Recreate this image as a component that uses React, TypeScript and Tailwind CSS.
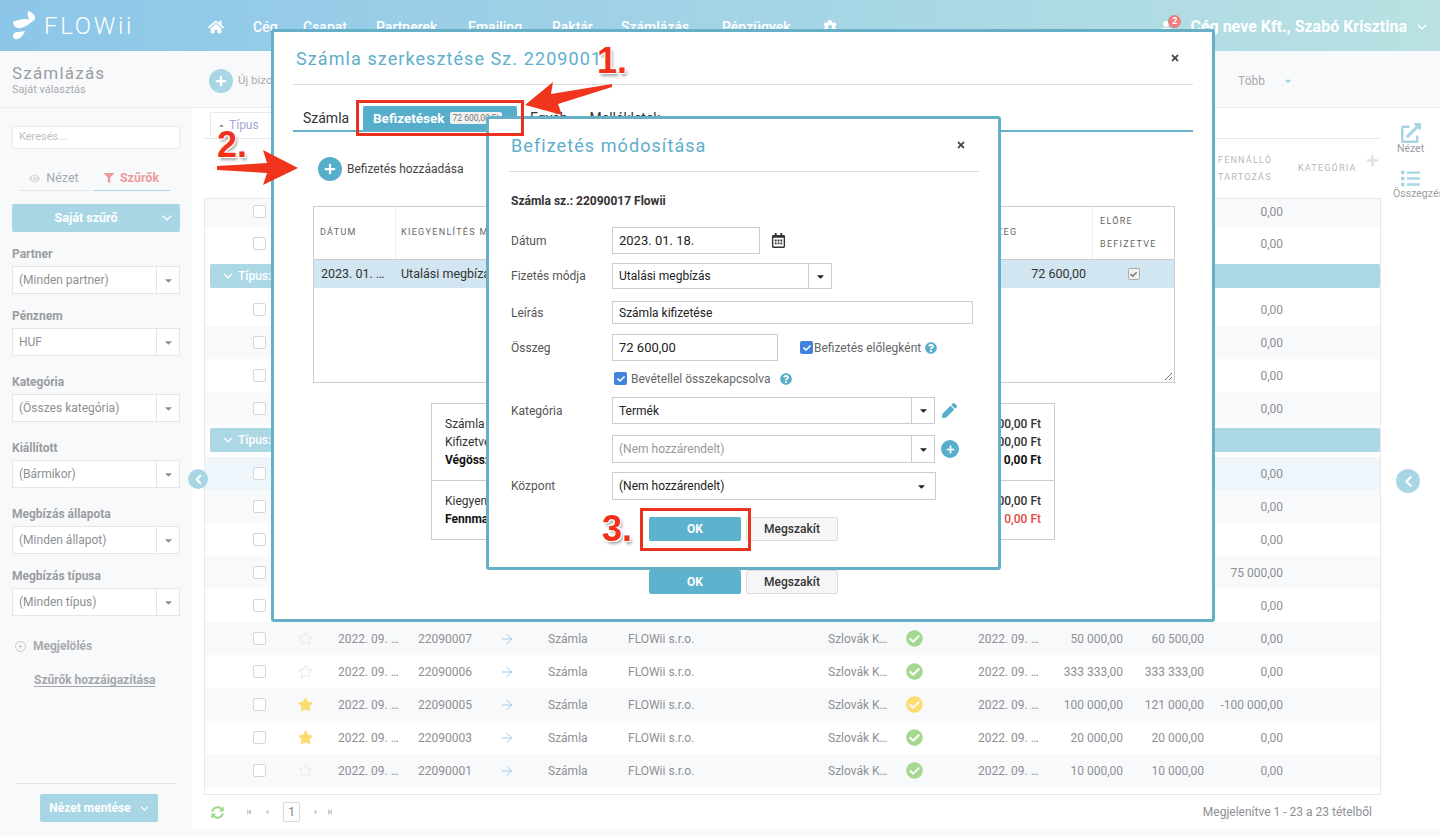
import React from 'react';
import { ChevronDown, ChevronLeft, ArrowRight } from 'lucide-react';
import {
  FaHome, FaCog, FaUser, FaStar, FaRegStar, FaCheckCircle, FaPen, FaPlus, FaQuestionCircle, FaTimes,
  FaCaretDown, FaRegCalendarAlt, FaFilter, FaEye, FaExternalLinkAlt, FaList, FaSyncAlt, FaCheck,
  FaStepBackward, FaStepForward, FaCaretLeft, FaCaretRight, FaCaretUp,
} from 'react-icons/fa';

const font = { fontFamily: 'Roboto, "Noto Sans", sans-serif' };

const Logo = () => (
  <svg width="26" height="32" viewBox="0 0 26 32" fill="white">
    <path d="M16 1c4 1 7 4 7 7 0 3-3 4-5 2-2-2-3-5-2-9z" />
    <path d="M1 12c2-1 8-3 13-3 3 0 6 1 7 2-3 2-7 6-12 7-4 1-8-2-8-6z" />
    <path d="M13 21c-1 3-4 7-7 8-3 1-5-1-5-3 0-3 2-4 5-4 2 0 5-1 7-1z" />
  </svg>
);

const nav: [string, string][] = [
  ['Cég', 'w-[50px]'], ['Csapat', 'w-[73px]'], ['Partnerek', 'w-[92px]'], ['Emailing', 'w-[84px]'],
  ['Raktár', 'w-[69px]'], ['Számlázás', 'w-[101px]'], ['Pénzügyek', 'w-[96px]'],
];

const Header = () => (
  <div className="flex h-[51px] shrink-0 items-center bg-gradient-to-r from-[#8cc6e8] to-[#b9e1e3] pl-[12px] text-white">
    <Logo />
    <span className="ml-[6px] w-[164px] text-[24px] font-light tracking-[2.7px]">FLOWii</span>
    <FaHome className="mr-[29px] mt-[3px] text-[16px]" />
    {nav.map(([n, w]) => (
      <span key={n} className={`${w} mt-[3px] text-[14px] font-medium`}>{n}</span>
    ))}
    <FaCog className="ml-[5px] mt-[3px] text-[14px]" />
    <div className="relative ml-auto mr-[10px] mt-[3px] flex items-center">
      <FaUser className="mr-[18px] text-[12px]" />
      <span className="absolute left-[8px] top-0 flex h-[13px] w-[13px] items-center justify-center rounded-full bg-[#ee7d7d] text-[9px] font-bold">2</span>
      <span className="text-[16px] font-bold">Cég neve Kft., Szabó Krisztina</span>
      <ChevronDown className="ml-[7px]" size={16} />
    </div>
  </div>
);

const SideSelect = ({ label, value, big }: { label: string; value: string; big?: boolean }) => (
  <>
    <div className={`${big ? 'mt-[18px]' : 'mt-[14px]'} h-[16px] text-[12px] font-bold leading-[16px] text-[#9a9da1]`}>{label}</div>
    <div className="mt-[4px] flex h-[28px] items-center border border-[#e4e6e8] bg-white text-[12px] text-[#8d9094]">
      <span className="flex-1 pl-[6px]">{value}</span>
      <span className="flex h-full w-[23px] items-center justify-center border-l border-[#e4e6e8]">
        <FaCaretDown className="text-[11px] text-[#8d9094]" />
      </span>
    </div>
  </>
);

const Sidebar = () => (
  <div className="flex w-[192px] shrink-0 flex-col bg-[#f8f9fb] px-[12px] pb-[14px]">
    <div className="mt-[18px] flex h-[23px] items-center border border-[#e8eaec] bg-white pl-[6px] text-[11px] text-[#bcbfc2]">Keresés...</div>
    <div className="ml-[6px] mt-[17px] flex h-[25px] text-[12.5px]">
      <div className="flex w-[72px] items-center justify-center gap-[6px] border-b border-[#e4e6e8] text-[#a8abae]">
        <FaEye className="text-[11px] text-[#d8dadc]" />Nézet
      </div>
      <div className="ml-[3px] flex w-[77px] items-center justify-center gap-[6px] border-b border-[#a9d6e5] font-bold text-[#ec9a9a]">
        <FaFilter className="text-[10px]" />Szűrők
      </div>
    </div>
    <div className="relative mt-[13px] flex h-[28px] items-center justify-center rounded-[2px] bg-[#a9d6e5] pr-[20px] text-[12.5px] font-bold text-white">
      Saját szűrő
      <ChevronDown className="absolute right-[5px]" size={16} />
    </div>
    <SideSelect label="Partner" value="(Minden partner)" />
    <SideSelect label="Pénznem" value="HUF" />
    <SideSelect big label="Kategória" value="(Összes kategória)" />
    <SideSelect big label="Kiállított" value="(Bármikor)" />
    <SideSelect big label="Megbízás állapota" value="(Minden állapot)" />
    <SideSelect label="Megbízás típusa" value="(Minden típus)" />
    <div className="mt-[22px] flex h-[16px] items-center text-[12px] font-bold text-[#a8abae]">
      <span className="ml-[3px] mr-[7px] flex h-[11px] w-[11px] items-center justify-center rounded-full border border-[#c6c8ca]">
        <FaPlus className="text-[5px] text-[#c6c8ca]" />
      </span>
      Megjelölés
    </div>
    <div className="ml-[22px] mt-[17px] h-[16px] text-[12px] font-bold text-[#a4a7aa] underline underline-offset-2">Szűrők hozzáigazítása</div>
    <div className="mx-[4px] mb-[10px] mt-auto border-t border-[#e2e4e6]" />
    <div className="ml-[28px] flex h-[28px] w-[118px] items-center justify-center gap-[7px] rounded-[2px] bg-[#a9d6e5] pl-[2px] text-[12px] font-bold text-white">
      Nézet mentése<ChevronDown size={13} />
    </div>
  </div>
);

const Box = () => <span className="h-[13px] w-[13px] rounded-[2px] border border-[#d4d6d8] bg-white" />;

type RowData = { star?: number; num?: string; status?: string; net?: string; gross?: string; bal: string; bg?: string };

const Row = ({ star, num, status, net, gross, bal, bg = 'bg-white', h = 'h-[33px]' }: RowData & { h?: string }) => (
  <div className={`flex ${h} shrink-0 items-center text-[12px] text-[#8d9094] ${bg}`}>
    <div className="flex w-[93px] items-center pl-[48px]"><Box /></div>
    <div className="w-[40px]">
      {num && (star === 1 ? <FaStar className="text-[15px] text-[#fbdc6e]" /> : <FaRegStar className="text-[15px] text-[#eceef0]" />)}
    </div>
    <div className="w-[80px]">{num && '2022. 09. …'}</div>
    <div className="w-[80px]">{num}</div>
    <div className="w-[50px] pl-[1px]">{num && <ArrowRight className="text-[#a5c9e6]" size={16} strokeWidth={1.5} />}</div>
    <div className="w-[80px]">{num && 'Számla'}</div>
    <div className="w-[200px]">{num && 'FLOWii s.r.o.'}</div>
    <div className="w-[78px]">{num && 'Szlovák K…'}</div>
    <div className="w-[72px]">{status && <FaCheckCircle className="text-[17px]" style={{ color: status }} />}</div>
    <div className="w-[72px]">{num && '2022. 09. …'}</div>
    <div className="w-[73px] text-right">{net}</div>
    <div className="w-[81px] text-right">{gross}</div>
    <div className="w-[79px] text-right">{bal}</div>
  </div>
);

const GroupRow = ({ top }: { top: string }) => (
  <div className={`${top} mb-[5px] ml-[5px] flex h-[24px] shrink-0 items-center rounded-[2px] bg-[#acd8e6] pl-[11px] text-[12px] font-medium text-white`}>
    <ChevronDown size={14} className="mr-[3px]" />Típus:
  </div>
);

const striped = 'bg-[#f8f9fb]';
const green = '#a4d88f';

const Main = () => (
  <div className="relative flex min-w-0 flex-1 flex-col bg-white">
    <div className="flex">
      <div className="w-[1189px] shrink-0 pl-[12px]">
        <div className="flex h-[31px] items-end border-b border-[#e6e8ea] pb-px pl-[6px]">
          <div className="flex h-[25px] w-[72px] items-center gap-[4px] rounded-t-[2px] border border-b-0 border-[#e6e8ea] pl-[7px] text-[12px] text-[#a3a8d8]">
            <FaCaretUp className="text-[7px] text-[#888]" />Típus
          </div>
        </div>
        <div className="relative flex h-[59px] items-center pl-[1014px] text-[9px] tracking-[1.2px] text-[#b6b9bc]">
          <span className="w-[80px] leading-[17px]">FENNÁLLÓ<br />TARTOZÁS</span>
          <span>KATEGÓRIA</span>
          <FaPlus className="absolute right-[2px] top-[15px] text-[13px] text-[#dfe1e3]" />
        </div>
        <div className="flex h-[597px] flex-col overflow-hidden border border-[#e6e8ea]">
          <Row h="h-[28px] pb-[3px]" bg={striped} bal="0,00" />
          <Row bal="0,00" />
          <GroupRow top="mt-[4px]" />
          <Row bal="0,00" />
          <Row bg={striped} bal="0,00" />
          <Row bal="0,00" />
          <Row bg={striped} bal="0,00" />
          <GroupRow top="mt-[3px]" />
          <Row bg="bg-[#eff6fb]" bal="0,00" />
          <Row bg={striped} bal="0,00" />
          <Row bal="0,00" />
          <Row bg={striped} bal="75 000,00" />
          <Row bal="0,00" />
          <Row bg={striped} num="22090007" status={green} net="50 000,00" gross="60 500,00" bal="0,00" />
          <Row num="22090006" status={green} net="333 333,00" gross="333 333,00" bal="0,00" />
          <Row bg={striped} star={1} num="22090005" status="#fbdc6e" net="100 000,00" gross="121 000,00" bal="-100 000,00" />
          <Row star={1} num="22090003" status={green} net="20 000,00" gross="20 000,00" bal="0,00" />
          <Row bg={striped} num="22090001" status={green} net="10 000,00" gross="10 000,00" bal="0,00" />
        </div>
      </div>
      <div className="flex min-w-0 flex-1 flex-col items-center pt-[15px] text-[10.5px] leading-[12px] text-[#9a9da1]">
        <FaExternalLinkAlt className="h-[20px] w-[20px] text-[#a9d6e5]" />
        <span>Nézet</span>
        <FaList className="mt-[14px] h-[19px] w-[21px] text-[#a9d6e5]" />
        <span className="ml-[16px] whitespace-nowrap">Összegzés</span>
      </div>
    </div>
    <div className="flex h-[34px] w-[1189px] items-center pl-[19px] pr-[9px] text-[#c6c8ca]">
      <FaSyncAlt className="mr-[22px] text-[13px] text-[#a4d88f]" />
      <FaStepBackward className="mr-[11px] text-[6px]" />
      <FaCaretLeft className="mr-[12px] text-[8px]" />
      <span className="flex h-[20px] w-[17px] items-center justify-center rounded-[2px] border border-[#d8dadc] text-[12px] text-[#7d8084]">1</span>
      <FaCaretRight className="ml-[12px] text-[8px]" />
      <FaStepForward className="ml-[7px] text-[6px]" />
      <span className="ml-auto text-[12px] text-[#8d9094]">Megjelenítve 1 - 23 a 23 tételből</span>
    </div>
    <div className="flex-1 bg-[#f8f9fb]" />
    <span className="absolute left-[-4px] top-[361px] flex h-[20px] w-[20px] items-center justify-center rounded-full bg-[#a9d6e5] text-white"><ChevronLeft size={15} strokeWidth={3} /></span>
    <span className="absolute left-[1204px] top-[361px] flex h-[24px] w-[24px] items-center justify-center rounded-full bg-[#a9d6e5] text-white"><ChevronLeft size={17} strokeWidth={3} /></span>
  </div>
);

const ModalButtons = () => (
  <div className="flex gap-[5px] text-[12px]">
    <span className="flex h-[24px] w-[92px] items-center justify-center rounded-[2px] bg-[#5db2cd] font-bold text-white">OK</span>
    <span className="flex h-[24px] w-[92px] items-center justify-center rounded-[2px] border border-[#dcdcdc] bg-[#f6f6f6] font-medium text-[#333]">Megszakít</span>
  </div>
);

const ModalHead = ({ title, className }: { title: string; className: string }) => (
  <div className={`flex h-[53px] shrink-0 items-center border-b border-[#dddddd] ${className}`}>
    <span className="text-[18px] font-normal tracking-[1.08px] text-[#5eaecb]">{title}</span>
    <FaTimes className="ml-auto text-[10px] text-[#444]" />
  </div>
);

const InvoiceModal = () => (
  <div className="absolute left-[271px] top-[29px] flex h-[593px] w-[944px] flex-col rounded-[3px] border-[3px] border-[#67afc6] bg-white px-[19px]">
    <ModalHead title="Számla szerkesztése Sz. 22090017" className="pl-[3px] pr-[13px]" />
    <div className="mt-[21px] flex h-[26px] items-stretch border-b-2 border-[#67afc6] text-[14px] text-[#333]">
      <span className="flex w-[70px] items-center pl-[10px]">Számla</span>
      <span className="flex w-[154px] items-center rounded-t-[2px] bg-[#57aecb] pl-[10px] text-[13.5px] font-bold text-white">
        Befizetések
        <span className="ml-[5px] rounded-[2px] bg-[#f1f1f1] px-[3px] text-[8.5px] font-normal leading-[12px] text-[#777]">72 600,00 Ft</span>
      </span>
      <span className="ml-[13px] flex items-center">Egyéb</span>
      <span className="ml-[22px] flex items-center">Mellékletek</span>
    </div>
    <div className="ml-[25px] mt-[25px] flex h-[24px] items-center text-[12px] text-[#444]">
      <span className="mr-[5px] flex h-[24px] w-[24px] items-center justify-center rounded-full bg-[#57aecb] text-white"><FaPlus className="text-[12px]" /></span>
      Befizetés hozzáadása
    </div>
    <div className="relative ml-[20px] mt-[25px] flex h-[177px] w-[862px] flex-col border border-[#cccccc]">
      <div className="grid h-[53px] shrink-0 grid-cols-[82px_1fr_124px_81px] items-center border-b border-[#cccccc] text-[9px] tracking-[1.3px] text-[#666]">
        <span className="flex h-full items-center border-r border-[#eeeeee] pl-[6px]">DÁTUM</span>
        <span className="pl-[5px]">KIEGYENLÍTÉS MÓDJA</span>
        <span className="flex h-full items-center border-r border-[#eeeeee] pl-[7px]">ÖSSZEG</span>
        <span className="pl-[7px] leading-[23px]">ELŐRE<br />BEFIZETVE</span>
      </div>
      <div className="grid h-[28px] grid-cols-[82px_1fr_124px_81px] items-center bg-[#d2e6f2] text-[12.5px] text-[#333]">
        <span className="pl-[7px]">2023. 01. …</span>
        <span className="pl-[5px]">Utalási megbízás</span>
        <span className="pr-[7px] text-right">72 600,00</span>
        <span className="flex justify-center">
          <span className="flex h-[12px] w-[12px] items-center justify-center rounded-[2px] border border-[#aaa] bg-[#f2f2f2]"><FaCheck className="text-[7px] text-[#777]" /></span>
        </span>
      </div>
      <svg className="absolute bottom-px right-px" width="9" height="9" viewBox="0 0 9 9" stroke="#777" fill="none"><path d="M1 8l7-7M5 8l3-3" /></svg>
    </div>
    <div className="ml-[138px] mt-[20px] flex h-[137px] w-[624px] flex-col border border-[#cccccc] text-[12px] leading-[18px] text-[#333]">
      <div className="flex h-[77px] justify-between border-b border-[#cccccc] px-[13px] pt-[11px]">
        <div>Számla összege<br />Kifizetve<br /><b className="text-[#111]">Végösszeg</b></div>
        <div className="text-right font-medium">72 600,00 Ft<br />72 600,00 Ft<br /><b className="text-[#111]">0,00 Ft</b></div>
      </div>
      <div className="flex justify-between px-[13px] pt-[11px]">
        <div>Kiegyenlítve<br /><b className="text-[#111]">Fennmaradó</b></div>
        <div className="text-right font-medium">72 600,00 Ft<br /><span className="text-[#e0483e]">0,00 Ft</span></div>
      </div>
    </div>
    <div className="ml-[356px] mt-[30px]"><ModalButtons /></div>
  </div>
);

const Label = ({ children }: { children: React.ReactNode }) => (
  <span className="w-[103px] shrink-0 pl-[2px] text-[12px] text-[#555]">{children}</span>
);

const Help = () => <FaQuestionCircle className="text-[12px] text-[#57aecb]" />;

const BlueCheck = () => (
  <span className="flex h-[13px] w-[13px] shrink-0 items-center justify-center rounded-[2px] bg-[#3f83de] text-white"><FaCheck className="text-[8px]" /></span>
);

const field = 'flex items-center border border-[#cccccc] bg-white pl-[6px] text-[12px] text-[#222]';

const DropField = ({ value, className, muted }: { value: string; className: string; muted?: boolean }) => (
  <div className={`${field} ${className} pr-0`}>
    <span className={`flex-1 ${muted ? 'text-[#999]' : ''}`}>{value}</span>
    <span className="flex h-full w-[23px] items-center justify-center border-l border-[#cccccc]"><FaCaretDown className="text-[11px] text-[#222]" /></span>
  </div>
);

const PaymentModal = () => (
  <div className="absolute left-[486px] top-[116px] flex h-[454px] w-[515px] flex-col rounded-[3px] border-[3px] border-[#67afc6] bg-white pl-[20px] pr-[19px]">
    <ModalHead title="Befizetés módosítása" className="pl-[2px] pr-[13px]" />
    <div className="mt-[21px] h-[16px] pl-[2px] text-[12px] font-bold leading-[16px] text-[#333]">Számla sz.: 22090017 Flowii</div>
    <div className="mt-[18px] flex items-center">
      <Label>Dátum</Label>
      <div className={`${field} h-[27px] w-[148px] !text-[13px]`}>2023. 01. 18.</div>
      <FaRegCalendarAlt className="ml-[11px] text-[15px] text-[#333]" />
    </div>
    <div className="mt-[9px] flex items-center">
      <Label>Fizetés módja</Label>
      <DropField value="Utalási megbízás" className="h-[26px] w-[220px]" />
    </div>
    <div className="mt-[12px] flex items-center">
      <Label>Leírás</Label>
      <div className={`${field} h-[23px] w-[361px]`}>Számla kifizetése</div>
    </div>
    <div className="mt-[10px] flex items-center">
      <Label>Összeg</Label>
      <div className={`${field} h-[27px] w-[166px] !text-[13px]`}>72 600,00</div>
      <span className="ml-[22px] mr-[1px]"><BlueCheck /></span>
      <span className="mr-[4px] text-[12px] text-[#666]">Befizetés előlegként</span>
      <Help />
    </div>
    <div className="ml-[105px] mt-[11px] flex h-[13px] items-center text-[12px] text-[#666]">
      <BlueCheck />
      <span className="ml-[4px] mr-[9px]">Bevétellel összekapcsolva</span>
      <Help />
    </div>
    <div className="mt-[12px] flex items-center">
      <Label>Kategória</Label>
      <DropField value="Termék" className="h-[27px] w-[323px]" />
      <FaPen className="ml-[7px] text-[15px] text-[#57aecb]" />
    </div>
    <div className="mt-[11px] flex items-center pl-[103px]">
      <DropField muted value="(Nem hozzárendelt)" className="h-[28px] w-[323px]" />
      <span className="ml-[6px] flex h-[18px] w-[18px] items-center justify-center rounded-full bg-[#57aecb] text-white"><FaPlus className="text-[9px]" /></span>
    </div>
    <div className="mt-[9px] flex items-center">
      <Label>Központ</Label>
      <div className={`${field} h-[28px] w-[324px] pr-[8px]`}>
        <span className="flex-1">(Nem hozzárendelt)</span>
        <FaCaretDown className="text-[11px]" />
      </div>
    </div>
    <div className="ml-[140px] mt-[17px]"><ModalButtons /></div>
  </div>
);

const numberCls = 'absolute text-[36px] font-bold leading-none text-[#f0301a] [text-shadow:1px_1px_0_#fff,-1px_-1px_0_#fff,1px_-1px_0_#fff,-1px_1px_0_#fff,2px_3px_3px_rgba(0,0,0,0.35)]';
const arial = { fontFamily: '"Liberation Sans", Arial, sans-serif' };

const Annotations = () => (
  <>
    <div className="absolute left-[356px] top-[100px] h-[36px] w-[168px] border-[3px] border-[#e8321e]" />
    <div className="absolute left-[640px] top-[508px] h-[43px] w-[111px] border-[3px] border-[#e8321e]" />
    <span className={`${numberCls} left-[597px] top-[43px]`} style={arial}>1.</span>
    <span className={`${numberCls} left-[217px] top-[127px]`} style={arial}>2.</span>
    <span className={`${numberCls} left-[602px] top-[511px]`} style={arial}>3.</span>
    <svg className="absolute left-[210px] top-[78px]" width="410" height="112" viewBox="210 78 410 112" fill="#f0351c">
      <path d="M612 84L551 94 553 82 525 105 562 115 558 104 612 87z" />
      <path d="M217 166L267 163 263 150 298 168 263 185 267 173 217 170z" />
    </svg>
  </>
);

export default function App() {
  return (
    <div className="relative flex h-[836px] w-[1440px] flex-col overflow-hidden bg-white" style={font}>
      <Header />
      <div className="flex h-[57px] shrink-0 items-center border-b border-[#eceef0] bg-[#f8f9fb]">
        <div className="w-[204px] pl-[12px]">
          <div className="text-[17px] leading-[20px] tracking-[1.2px] text-[#9a9da1]">Számlázás</div>
          <div className="mt-px text-[11px] leading-[12px] text-[#a8abae]">Saját választás</div>
        </div>
        <span className="ml-[5px] mt-[3px] flex h-[24px] w-[24px] items-center justify-center rounded-full bg-[#a9d6e5] text-white"><FaPlus className="text-[12px]" /></span>
        <span className="ml-[5px] mt-[3px] text-[11.5px] text-[#a8abae]">Új bizonylat</span>
        <span className="ml-[941px] mt-[3px] text-[12px] text-[#a8abae]">Több</span>
        <FaCaretDown className="ml-[18px] mt-[3px] text-[10px] text-[#a9d6e5]" />
      </div>
      <div className="flex min-h-0 flex-1">
        <Sidebar />
        <Main />
      </div>
      <InvoiceModal />
      <PaymentModal />
      <Annotations />
    </div>
  );
}
